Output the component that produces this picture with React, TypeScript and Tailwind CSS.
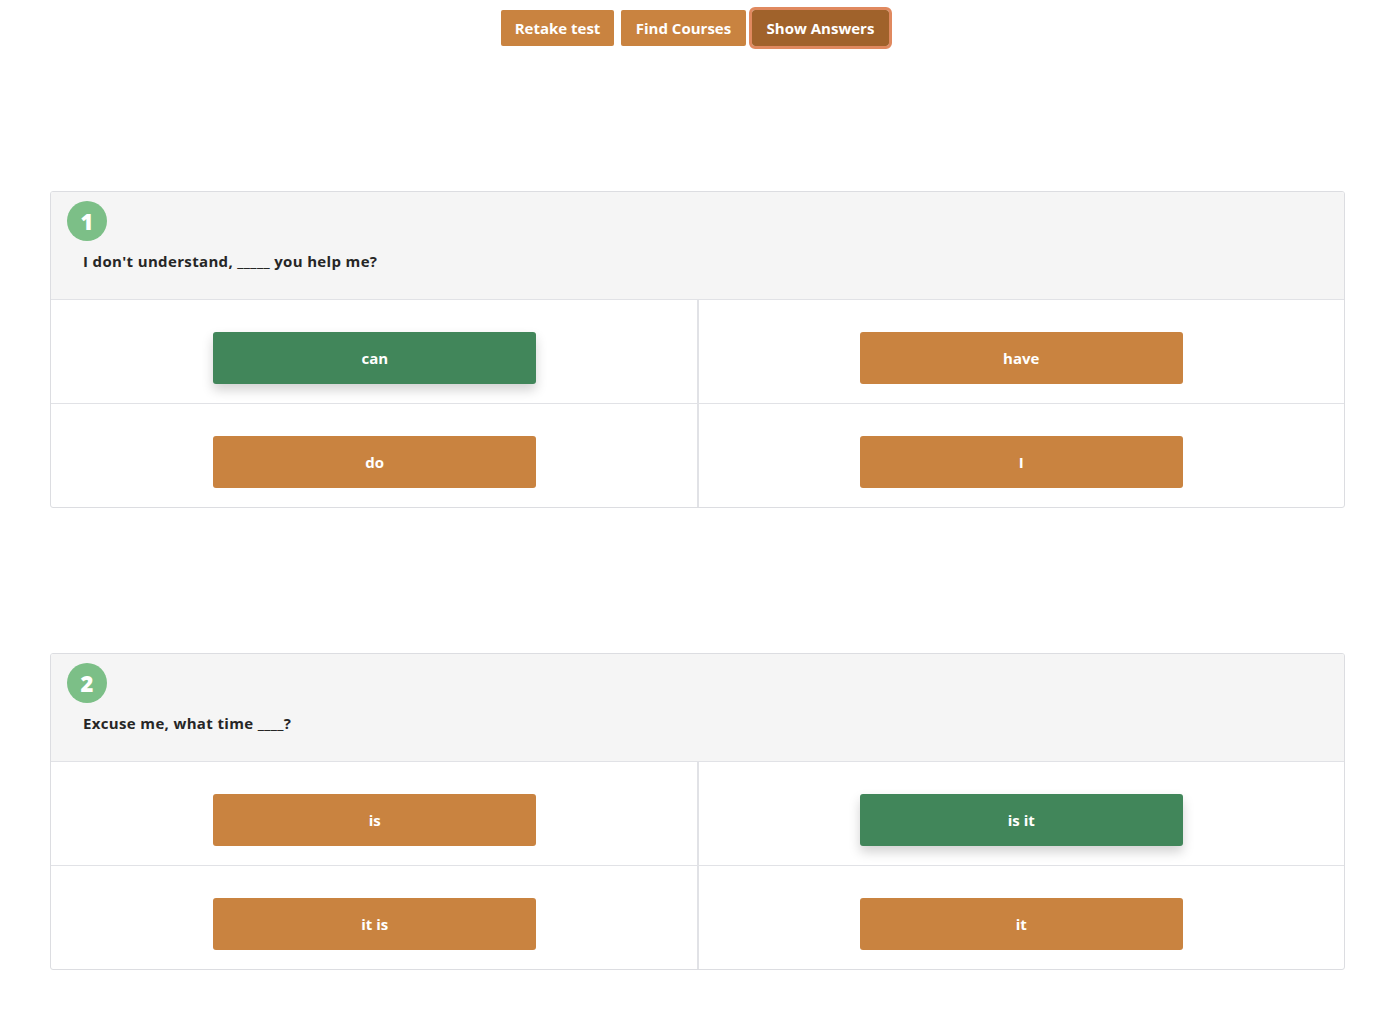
import React from 'react';

type Question = {
    num: number;
    text: string;
    options: string[];
    answer: string;
};

const QUESTIONS: Question[] = [
    { num: 1, text: "I don't understand, _____ you help me?", options: ['can', 'have', 'do', 'I'], answer: 'can' },
    { num: 2, text: 'Excuse me, what time ____?', options: ['is', 'is it', 'it is', 'it'], answer: 'is it' },
];

const OptionCell: React.FC<{ label: string; correct: boolean; index: number }> = ({ label, correct, index }) => {
    const left = index % 2 === 0;
    const top = index < 2;
    return (
        <div
            className={`flex justify-center items-start pt-[32px] border-[#e1e2e6] ${left ? 'border-r pl-[2px]' : 'border-l'} ${top ? 'border-b' : ''}`}
        >
            <button
                className={`w-[323px] h-[52px] rounded-[3px] text-white text-[15px] font-bold ${correct ? 'bg-[#41865a] shadow-[0_6px_12px_rgba(0,0,0,0.18)]' : 'bg-[#c98340]'}`}
            >
                {label}
            </button>
        </div>
    );
};

const QuestionCard: React.FC<{ q: Question }> = ({ q }) => (
    <div className="border border-[#dcdde1] rounded-[3px] overflow-hidden">
        <div className="bg-[#f5f5f5] h-[108px] pt-[9px] pl-[16px] border-b border-[#e1e2e6]">
            <div className="w-[40px] h-[40px] rounded-full bg-[#7cbf87] text-white flex items-center justify-center text-[22px] font-extrabold leading-none">
                {q.num}
            </div>
            <p className="mt-[9px] ml-[16px] text-[15px] font-bold text-[#262626] tracking-[0.35px]">{q.text}</p>
        </div>
        <div className="grid grid-cols-2 grid-rows-[104px_103px]">
            {q.options.map((opt, i) => (
                <OptionCell key={opt} label={opt} index={i} correct={opt === q.answer} />
            ))}
        </div>
    </div>
);

const App: React.FC = () => {
    return (
        <div className="min-h-screen bg-white font-['Open_Sans','Lato',sans-serif]">
            {/* Top actions */}
            <div className="flex justify-center items-center pt-[10px]">
                <button className="w-[113px] h-[36px] rounded-[2px] bg-[#c98340] text-white text-[15px] font-bold">Retake test</button>
                <button className="ml-[7px] w-[125px] h-[36px] rounded-[2px] bg-[#c98340] text-white text-[15px] font-bold">Find Courses</button>
                <button className="ml-[6px] w-[137px] h-[36px] rounded-[3px] bg-[#a0622b] text-white text-[15px] font-bold outline-[3px] outline outline-[#e0895f]">Show Answers</button>
            </div>

            {/* Questions */}
            <div className="ml-[50px] mr-[45px] mt-[145px] flex flex-col gap-[145px]">
                {QUESTIONS.map(q => (
                    <QuestionCard key={q.num} q={q} />
                ))}
            </div>
        </div>
    );
};

export default App;
